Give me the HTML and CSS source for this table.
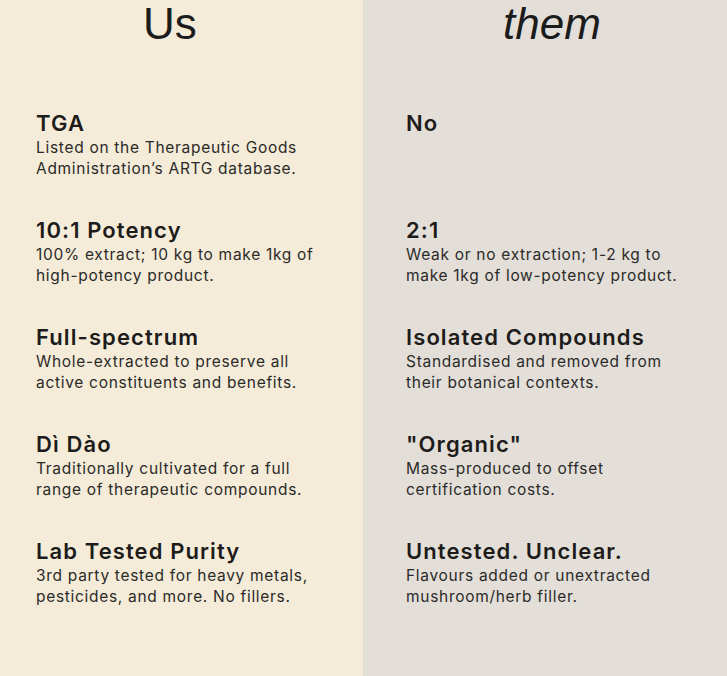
FILE: index.html
```html
<!DOCTYPE html>
<html lang="en">
<head>
<meta charset="utf-8">
<title>Us vs them</title>
<link rel="stylesheet" href="styles.css">
</head>
<body>
<main class="compare">
  <section class="col col-us">
    <h2 class="col-title">Us</h2>
    <ul class="items">
      <li class="item">
        <h3 class="item-title">TGA</h3>
        <p class="item-text">Listed on the Therapeutic Goods Administration’s ARTG database.</p>
      </li>
      <li class="item">
        <h3 class="item-title">10:1 Potency</h3>
        <p class="item-text">100% extract; 10 kg to make 1kg of high-potency product.</p>
      </li>
      <li class="item">
        <h3 class="item-title">Full-spectrum</h3>
        <p class="item-text">Whole-extracted to preserve all active constituents and benefits.</p>
      </li>
      <li class="item">
        <h3 class="item-title">Dì Dào</h3>
        <p class="item-text">Traditionally cultivated for a full range of therapeutic compounds.</p>
      </li>
      <li class="item">
        <h3 class="item-title">Lab Tested Purity</h3>
        <p class="item-text">3rd party tested for heavy metals, pesticides, and more. No fillers.</p>
      </li>
    </ul>
  </section>
  <section class="col col-them">
    <h2 class="col-title col-title-them">them</h2>
    <ul class="items">
      <li class="item">
        <h3 class="item-title">No</h3>
      </li>
      <li class="item">
        <h3 class="item-title">2:1</h3>
        <p class="item-text">Weak or no extraction; 1-2 kg to make 1kg of low-potency product.</p>
      </li>
      <li class="item">
        <h3 class="item-title">Isolated Compounds</h3>
        <p class="item-text">Standardised and removed from their botanical contexts.</p>
      </li>
      <li class="item">
        <h3 class="item-title">"Organic"</h3>
        <p class="item-text">Mass-produced to offset certification costs.</p>
      </li>
      <li class="item">
        <h3 class="item-title">Untested. Unclear.</h3>
        <p class="item-text">Flavours added or unextracted mushroom/herb filler.</p>
      </li>
    </ul>
  </section>
</main>
</body>
</html>
```

FILE: styles.css
```css
* { box-sizing: border-box; }

html, body {
  margin: 0;
  padding: 0;
  height: 100%;
}

body {
  font-family: Inter, "Noto Sans", sans-serif;
  color: #242322;
}

.compare {
  display: grid;
  grid-template-columns: 363px 1fr;
  min-height: 676px;
}

.col {
  display: flex;
  flex-direction: column;
}

.col-us {
  background: #f4ecd8;
  padding-left: 36px;
}

.col-them {
  background: #e3dfd8;
  padding-left: 43px;
}

.col-title {
  margin: 0;
  font-family: "Liberation Sans", Arial, sans-serif;
  font-weight: 400;
  font-size: 44px;
  line-height: 48px;
  color: #1c1c1c;
  padding-left: 107px;
}

.col-title-them {
  font-style: italic;
  padding-left: 97px;
}

.items {
  list-style: none;
  margin: 62px 0 0;
  padding: 0;
}

.item {
  min-height: 107px;
}

.item-title {
  margin: 0;
  font-size: 22px;
  line-height: 26px;
  font-weight: 600;
  letter-spacing: 1.1px;
  color: #1d1c1b;
}

.item-text {
  margin: 1px 0 0;
  width: 284px;
  font-size: 15.5px;
  line-height: 21px;
  letter-spacing: 0.7px;
  color: #2b2a28;
}
```
